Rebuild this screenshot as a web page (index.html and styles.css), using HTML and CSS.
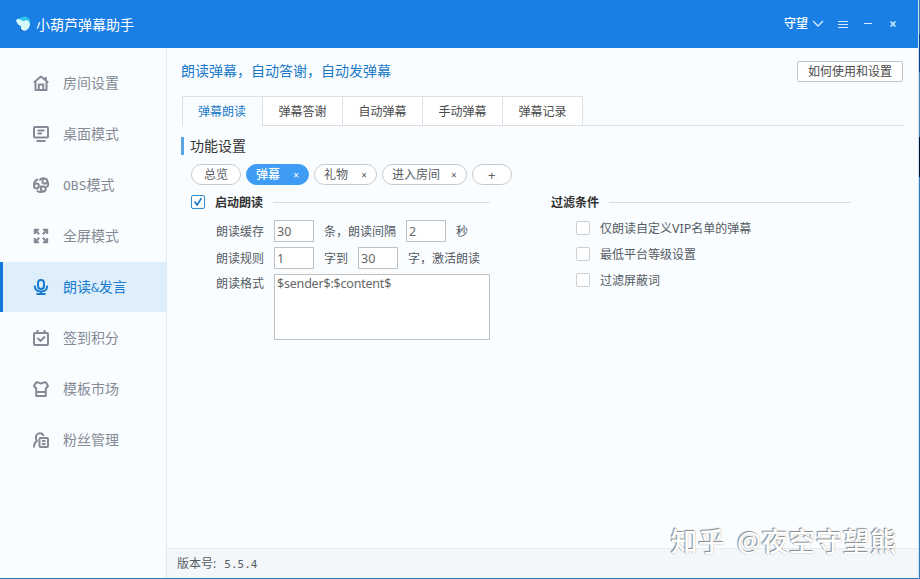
FILE: index.html
```html
<!DOCTYPE html>
<html lang="zh-CN">
  <head>
    <meta charset="utf-8">
    <title>小葫芦弹幕助手</title>
    <link rel="stylesheet" href="styles.css">
  </head>
  <body>
    <div class="window">
      <header class="titlebar">
        <svg class="logo" width="16" height="16" viewBox="0 0 16 16">
          <path d="M1 4 Q6 -1 11 1 Q15 3 14 9 L8 7 Z" fill="#2cc4ec"/>
          <path d="M0 4 Q2 2 5 4 Q8 6 10 4 Q14 5 14 9 Q13 14 8 15 Q4 14 5 10 Q1 9 0 4 Z" fill="#d9fafa"/>
          <path d="M5 11 Q4 14 8 15 Q5 16 4 14 Z" fill="#17609d"/>
        </svg>
        <span class="app-name">小葫芦弹幕助手</span>
        <span class="user">守望</span>
        <svg class="chevron" width="12" height="8" viewBox="0 0 12 8"><path d="M1 1 L6 6 L11 1"/></svg>
        <svg class="menu" width="10" height="9" viewBox="0 0 10 9"><path d="M0 1.5H10M0 4.5H10M0 7.5H10"/></svg>
        <svg class="minimize" width="8" height="9" viewBox="0 0 8 9"><path d="M0 3.5H8"/></svg>
        <svg class="close" width="6" height="6" viewBox="0 0 6 6"><path d="M.5 .5L5.5 5.5M5.5 .5L.5 5.5"/></svg>
      </header>

      <div class="content">
        <nav class="sidebar">
          <a class="nav-item">
            <svg class="icon" viewBox="0 0 16 16"><path d="M.8 7.5 L8 1.5 L15.2 7.5 M12.8 2V5M2.5 7V15H13.5V7M5.8 14.5V9.5H10.2V14.5"/></svg>
            <span>房间设置</span>
          </a>
          <a class="nav-item">
            <svg class="icon" viewBox="0 0 16 16"><rect x="1" y="1" width="14" height="10.5" rx="1"/><path d="M4.5 4.5H11.5M4.5 7.5H9M3.5 15H12.5"/></svg>
            <span>桌面模式</span>
          </a>
          <a class="nav-item">
            <svg class="icon" viewBox="0 0 16 16"><circle cx="3.5" cy="9" r="2.4"/><path d="M1.1 9Q.5 4 5 2.2"/><circle cx="11.8" cy="4.2" r="2.4"/><path d="M14.2 4.2Q17 8.5 13.2 10M6.5 3.5Q8 .5 11.5 1.5"/><circle cx="10.3" cy="12" r="2.4"/><path d="M10 14.5Q5.5 15.8 4 13.5M8 12V8.5"/></svg>
            <span><span class="latin">OBS</span>模式</span>
          </a>
          <a class="nav-item">
            <svg class="icon" viewBox="0 0 16 16"><path d="M1.8 6V1.8H6M1.8 1.8L6.2 6.2M10 1.8H14.2V6M14.2 1.8L9.8 6.2M1.8 10V14.2H6M1.8 14.2L6.2 9.8M10 14.2H14.2V10M14.2 14.2L9.8 9.8"/></svg>
            <span>全屏模式</span>
          </a>
          <a class="nav-item active">
            <svg class="icon" viewBox="0 0 16 16"><rect x="5" y="1" width="6" height="9" rx="3"/><path d="M1.8 6.5V7Q2 12.5 8 12.5Q14 12.5 14.2 7V6.5M8 12.5V15M3.5 15H12.5"/></svg>
            <span>朗读<span class="latin">&amp;</span>发言</span>
          </a>
          <a class="nav-item">
            <svg class="icon" viewBox="0 0 16 16"><rect x="1" y="3" width="14" height="12" rx="1"/><path d="M4.5 0V4M11.5 0V4M4.5 8L7.5 11L12 6.5"/></svg>
            <span>签到积分</span>
          </a>
          <a class="nav-item">
            <svg class="icon" viewBox="0 0 16 16"><path d="M5 1.2Q8 3.5 11 1.2L13 1.5L15 5L12.8 7.5V15H3.2V7.5L1 5L3 1.5ZM3.5 11H12.5"/></svg>
            <span>模板市场</span>
          </a>
          <a class="nav-item">
            <svg class="icon" viewBox="0 0 16 16"><path d="M1 15.5Q1 10.5 4 9Q2 6 3.5 3Q5.5 .5 8.5 1.5Q10.5 2.5 10.5 4"/><rect x="6.5" y="6" width="8.5" height="9" rx="1"/><path d="M9 9H12.5M9 12H12.5"/></svg>
            <span>粉丝管理</span>
          </a>
        </nav>

        <main class="main">
          <div class="top">
            <h1 class="page-title">朗读弹幕，自动答谢，自动发弹幕</h1>
            <button class="help">如何使用和设置</button>
          </div>

          <div class="tabs">
            <div class="tab active">弹幕朗读</div>
            <div class="tab">弹幕答谢</div>
            <div class="tab">自动弹幕</div>
            <div class="tab">手动弹幕</div>
            <div class="tab">弹幕记录</div>
          </div>

          <h2 class="section-title">功能设置</h2>

          <div class="pills">
            <span class="pill">总览</span>
            <span class="pill active closable">弹幕<b>×</b></span>
            <span class="pill closable">礼物<b>×</b></span>
            <span class="pill closable">进入房间<b>×</b></span>
            <span class="pill add">+</span>
          </div>

          <div class="panels">
            <section class="panel read">
              <div class="legend">
                <span class="checkbox checked"><svg width="14" height="14" viewBox="0 0 14 14"><path d="M3 6.5L6 10.5L11 2.5"/></svg></span>
                <span>启动朗读</span>
              </div>
              <div class="row">
                <label>朗读缓存</label><input value="30"><span>条，朗读间隔</span><input value="2"><span>秒</span>
              </div>
              <div class="row">
                <label>朗读规则</label><input value="1"><span>字到</span><input value="30"><span>字，激活朗读</span>
              </div>
              <div class="row format">
                <label>朗读格式</label><textarea spellcheck="false">$sender$:$content$</textarea>
              </div>
            </section>

            <section class="panel filter">
              <div class="legend"><span>过滤条件</span></div>
              <div class="option"><span class="checkbox"></span><span>仅朗读自定义<span class="vip">VIP</span>名单的弹幕</span></div>
              <div class="option"><span class="checkbox"></span><span>最低平台等级设置</span></div>
              <div class="option"><span class="checkbox"></span><span>过滤屏蔽词</span></div>
            </section>
          </div>

          <footer class="status">版本号: <span class="version">5.5.4</span></footer>
        </main>
      </div>
      <div class="watermark">知乎 @夜空守望熊</div>
    </div>
  </body>
</html>
```

FILE: styles.css
```css
* {
  box-sizing: border-box;
}

body {
  margin: 0;
  background: linear-gradient(#3b78b0 0, #3b78b0 34px, #0d438b 34px, #0d438b 72px, #4b83b0 72px, #4b83b0 137px, #04142f 137px, #04142f 177px, #3b7cba 177px);
  font: 12px/18px "Noto Sans", "Noto Sans CJK SC", sans-serif;
  color: #555b63;
}

.window {
  position: relative;
  display: flex;
  flex-direction: column;
  width: 919px;
  height: 579px;
  background: #fafdff;
  border-right: 1px solid #c9e2f5;
  border-bottom: 1px solid #2679c0;
}

/* title bar */
.titlebar {
  display: flex;
  align-items: center;
  flex: none;
  height: 48px;
  padding: 0 22px 0 16px;
  background: #1a7fe5;
  color: #fff;
}

.titlebar svg {
  fill: none;
  stroke: #d5edff;
}

.titlebar .logo {
  stroke: none;
}

.app-name {
  margin-left: 4px;
  padding-top: 1px;
  font-size: 14px;
}

.user {
  margin-left: auto;
  font-weight: 500;
}

.titlebar .chevron {
  margin-left: 4px;
  stroke-width: 1.3;
}

.menu {
  margin-left: 14px;
}

.minimize {
  margin-left: 16px;
}

.titlebar .close {
  margin-left: 18px;
  stroke-width: 1.5;
}

.content {
  display: flex;
  flex: 1;
}

/* sidebar */
.sidebar {
  display: flex;
  flex-direction: column;
  gap: 1px;
  width: 167px;
  padding-top: 10px;
  border-right: 1px solid #e4eaf2;
}

.nav-item {
  display: flex;
  align-items: center;
  gap: 14px;
  height: 50px;
  padding-left: 33px;
  font-size: 14px;
  color: #858b96;
}

.nav-item.active {
  padding-left: 30px;
  border-left: 3px solid #1278dc;
  background: #deeefb;
  color: #1a7cd0;
}

.icon {
  width: 16px;
  height: 16px;
  fill: none;
  stroke: currentColor;
  stroke-width: 2;
  stroke-linejoin: round;
}

.latin {
  font-family: "DejaVu Sans Mono", monospace;
  font-size: 13px;
}

/* main area */
.main {
  display: flex;
  flex-direction: column;
  flex: 1;
}

.top {
  display: flex;
  justify-content: space-between;
  padding: 13px 15px 0 14px;
}

.page-title {
  margin: 0;
  font-size: 14px;
  line-height: 20px;
  font-weight: 400;
  color: #1b7ac7;
}

.help {
  width: 106px;
  height: 21px;
  margin: 0;
  padding: 1px 0 0;
  border: 1px solid #bdc3c9;
  border-radius: 2px;
  background: #fff;
  font: inherit;
  color: #4a4a4a;
}

.tabs {
  display: flex;
  height: 30px;
  margin: 14px 14px 0 15px;
  border-bottom: 1px solid #dfe3e8;
}

.tab {
  width: 80px;
  height: 30px;
  border: 1px solid #dcdfe4;
  border-left: 0;
  background: #fff;
  line-height: 29px;
  text-align: center;
  color: #4a4a4a;
}

.tab.active {
  width: 81px;
  padding-right: 1px;
  border-left: 1px solid #dcdfe4;
  border-bottom: 0;
  background: #fafdff;
  color: #1b7ac7;
}

.section-title {
  height: 18px;
  margin: 11px 0 0 14px;
  padding-left: 6px;
  border-left: 3px solid #5da6e4;
  font-size: 14px;
  line-height: 18px;
  font-weight: 400;
  color: #333;
}

.pills {
  display: flex;
  gap: 5px;
  margin: 9px 0 0 24px;
}

.pill {
  display: flex;
  justify-content: center;
  height: 21px;
  min-width: 50px;
  padding: 0 9px;
  border: 1px solid #c6c9cd;
  border-radius: 11px;
  background: #fff;
  line-height: 20px;
}

.closable {
  justify-content: space-between;
  min-width: 63px;
}

.closable b {
  margin-left: 11px;
  font-size: 10px;
  font-weight: 400;
}

.pill.active {
  border-color: #3f9cf5;
  background: #3f9cf5;
  color: #fff;
  font-weight: 500;
}

.add {
  width: 40px;
  min-width: 40px;
  font-size: 13px;
}

/* settings panels */
.panels {
  display: flex;
  flex: 1;
  gap: 61px;
  padding: 8px 0 0 24px;
}

.read {
  width: 299px;
}

.filter {
  width: 300px;
}

.legend {
  display: flex;
  align-items: center;
  gap: 10px;
  font-weight: 700;
  color: #333;
}

.legend > span:not(.checkbox),
.row > span,
.row > label,
.option > span:not(.checkbox) {
  padding-top: 2px;
  line-height: 16px;
}

.legend::after {
  content: "";
  flex: 1;
  height: 1px;
  background: #d8dde4;
}

.checkbox {
  width: 14px;
  height: 14px;
  border: 1px solid #ccd0d3;
  border-radius: 2px;
  background: #fff;
}

.checkbox.checked {
  display: flex;
  border-color: #338bd0;
}

.checked svg {
  flex: none;
  width: 12px;
  height: 12px;
  fill: none;
  stroke: #1b7ac7;
  stroke-width: 2;
}

.row {
  display: flex;
  align-items: center;
  gap: 10px;
  height: 22px;
  margin: 9px 0 0 25px;
}

.row + .row {
  margin-top: 5px;
}

.row input,
.row textarea {
  width: 40px;
  height: 22px;
  margin: 0;
  padding: 0 2px;
  border: 1px solid #bfc2c5;
  border-radius: 0;
  background: #fff;
  font: 12.5px/18px "Noto Sans", sans-serif;
  color: #666;
}

.row.format {
  align-items: flex-start;
  height: 66px;
}

.row textarea {
  width: 216px;
  height: 66px;
  letter-spacing: -0.2px;
  resize: none;
}

.option {
  display: flex;
  align-items: center;
  gap: 10px;
  height: 26px;
  padding-left: 25px;
}

.legend + .option {
  margin-top: 4px;
}

.vip {
  font-size: 12.5px;
}

.status {
  height: 30px;
  padding-left: 10px;
  border-top: 1px solid #e8ecf0;
  background: #f4f7fa;
  line-height: 30px;
}

.version {
  margin-left: 5px;
  font-family: "DejaVu Sans Mono", monospace;
  font-size: 11px;
}

.watermark {
  position: absolute;
  right: 21px;
  bottom: 18px;
  font-size: 27px;
  line-height: 36px;
  letter-spacing: 0.1px;
  word-spacing: 5px;
  font-weight: 500;
  color: #fff;
  text-shadow: -1px -1px 1px #888, 0 0 1px #999;
}
```
